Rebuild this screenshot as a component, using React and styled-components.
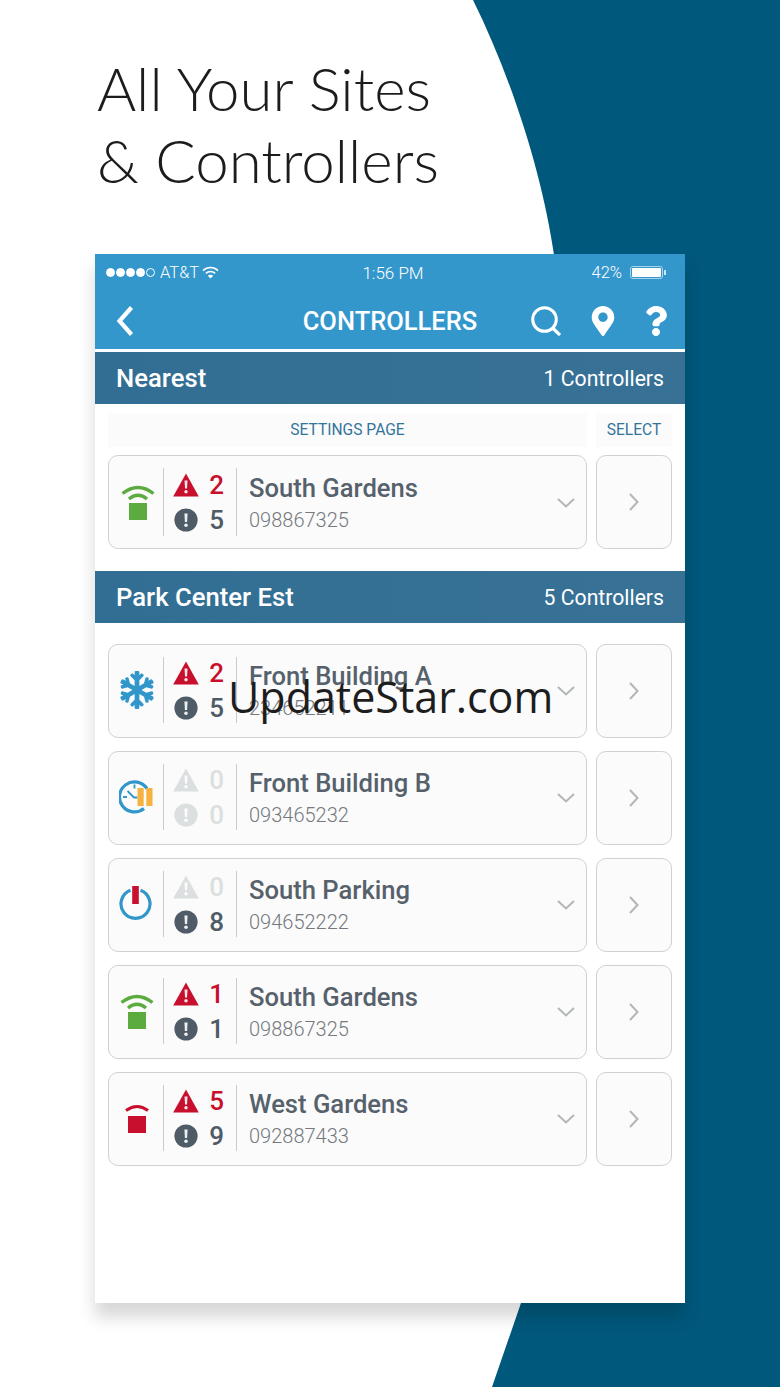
import React from 'react';
import styled, { createGlobalStyle } from 'styled-components';
import { FaSnowflake, FaMapMarkerAlt, FaQuestion } from 'react-icons/fa';

const GlobalStyle = createGlobalStyle`
  html, body {
    margin: 0;
    padding: 0;
    background: #fff;
  }
  * {
    box-sizing: border-box;
  }
`;

const controllers = [
  { name: 'Front Building A', serial: '234652211', status: 'snow', alerts: 2, warnings: 5 },
  { name: 'Front Building B', serial: '093465232', status: 'schedule', alerts: 0, warnings: 0 },
  { name: 'South Parking', serial: '094652222', status: 'power', alerts: 0, warnings: 8 },
  { name: 'South Gardens', serial: '098867325', status: 'online', alerts: 1, warnings: 1 },
  { name: 'West Gardens', serial: '092887433', status: 'offline', alerts: 5, warnings: 9 },
];

function OnlineIcon() {
  return (
    <svg width="36" height="36" viewBox="0 0 36 36" fill="none">
      <path d="M2.5 9.5Q18 -2.5 33.5 9.5" stroke="#5bab3f" strokeWidth="3.4" />
      <path d="M9 15Q18 7.5 27 15" stroke="#5bab3f" strokeWidth="3.4" />
      <rect x="9" y="19" width="18" height="17" fill="#5bab3f" />
    </svg>
  );
}

function OfflineIcon() {
  return (
    <svg width="36" height="36" viewBox="0 0 36 36" fill="none">
      <path d="M7 10.5Q18 2.5 29 10.5" stroke="#c8102e" strokeWidth="3" />
      <rect x="9" y="16" width="18" height="17" fill="#c8102e" />
    </svg>
  );
}

function ScheduleIcon() {
  return (
    <svg width="36" height="36" viewBox="0 0 36 36" fill="none">
      <path d="M25 29.5A15 15 0 1 1 28 9.7" stroke="#3197cb" strokeWidth="3.2" />
      <path d="M4 18H8M15.5 5.5V9.5M8.5 12L15 18.5H18.5" stroke="#3197cb" strokeWidth="1.8" />
      <rect x="18.5" y="9" width="6.2" height="18" fill="#f6b23f" />
      <rect x="27.3" y="9" width="6.2" height="18" fill="#f6b23f" />
    </svg>
  );
}

function PowerIcon() {
  return (
    <svg width="36" height="36" viewBox="0 0 36 36" fill="none">
      <path d="M11.5 4.2A14.5 14.5 0 1 0 21.5 4.2" stroke="#3197cb" strokeWidth="3.2" />
      <rect x="13.2" y="0" width="6.6" height="18" fill="#c8102e" />
    </svg>
  );
}

function StatusIcon({ status }) {
  if (status === 'snow') return <FaSnowflake size={38} color="#3197cb" />;
  if (status === 'schedule') return <ScheduleIcon />;
  if (status === 'power') return <PowerIcon />;
  if (status === 'offline') return <OfflineIcon />;
  return <OnlineIcon />;
}

function AlertTriangle({ color }) {
  return (
    <svg width="26" height="24" viewBox="0 0 26 24">
      <path d="M13 0.5L25.8 23.5H0.2Z" fill={color} />
      <path d="M11.5 7.5H14.5L14 15.5H12Z" fill="#fff" opacity="0.9" />
      <circle cx="13" cy="18.8" r="1.7" fill="#fff" opacity="0.9" />
    </svg>
  );
}

function AlertCircle({ color }) {
  return (
    <svg width="26" height="24" viewBox="0 0 26 24">
      <circle cx="13" cy="12" r="11.6" fill={color} />
      <path d="M11.4 5.5H14.6L14.1 14H11.9Z" fill="#fff" opacity="0.9" />
      <circle cx="13" cy="17.3" r="1.8" fill="#fff" opacity="0.9" />
    </svg>
  );
}

function ControllerRow({ item }) {
  const alertColor = item.alerts > 0 ? '#c8102e' : '#dcdfe0';
  const warnColor = item.warnings > 0 ? '#4f5b66' : '#dcdfe0';
  return (
    <RowGrid>
      <Card>
        <IconCell>
          <StatusIcon status={item.status} />
        </IconCell>
        <CountCell>
          <CountLine>
            <AlertTriangle color={alertColor} />
            <Count $color={alertColor}>{item.alerts}</Count>
          </CountLine>
          <CountLine>
            <AlertCircle color={warnColor} />
            <Count $color={warnColor}>{item.warnings}</Count>
          </CountLine>
        </CountCell>
        <Info>
          <Name>{item.name}</Name>
          <Serial>{item.serial}</Serial>
        </Info>
        <Chevron>
          <svg width="18" height="10" viewBox="0 0 18 10" fill="none">
            <path d="M1 1L9 8.5L17 1" stroke="#b3b6b8" strokeWidth="2" />
          </svg>
        </Chevron>
      </Card>
      <SelectButton>
        <svg width="10" height="18" viewBox="0 0 10 18" fill="none">
          <path d="M1 1L8.5 9L1 17" stroke="#b3b6b8" strokeWidth="2" />
        </svg>
      </SelectButton>
    </RowGrid>
  );
}

export default function App() {
  return (
    <Page>
      <GlobalStyle />
      <Wave viewBox="0 0 780 1387" preserveAspectRatio="none">
        <path
          d="M473 0C515 85 545 185 555 262C590 560 590 1000 521 1303L492 1387H780V0Z"
          fill="#00587c"
        />
      </Wave>

      <Heading>
        All Your Sites
        <br />
        &amp; Controllers
      </Heading>

      <Phone>
        <TopBlue>
          <StatusBar>
            <StatusLeft>
              <Dots>
                <Dot $on />
                <Dot $on />
                <Dot $on />
                <Dot $on />
                <Dot />
              </Dots>
              <span>AT&amp;T</span>
              <WifiIcon width="17" height="13" viewBox="0 0 17 13" fill="none">
                <path d="M1 4.6C5.3 0.5 11.7 0.5 16 4.6" stroke="#fff" strokeWidth="1.5" />
                <path d="M3.8 7.4C6.5 4.9 10.5 4.9 13.2 7.4" stroke="#fff" strokeWidth="1.5" />
                <path d="M5.8 9.7L8.5 12.6L11.2 9.7C9.6 8.4 7.4 8.4 5.8 9.7Z" fill="#fff" />
              </WifiIcon>
            </StatusLeft>
            <StatusTime>1:56 PM</StatusTime>
            <StatusRight>
              <span>42%</span>
              <Battery>
                <BatteryFill />
              </Battery>
            </StatusRight>
          </StatusBar>
          <NavBar>
            <BackIcon width="18" height="32" viewBox="0 0 18 32" fill="none">
              <path d="M15.5 2.5L3.5 16L15.5 29.5" stroke="#fff" strokeWidth="4.2" />
            </BackIcon>
            <NavTitle>CONTROLLERS</NavTitle>
            <NavIcons>
              <SearchIcon width="31" height="30" viewBox="0 0 31 30" fill="none">
                <circle cx="14.5" cy="13.5" r="11.8" stroke="#fff" strokeWidth="3" />
                <path d="M22.5 22L30 29" stroke="#fff" strokeWidth="3.2" />
              </SearchIcon>
              <FaMapMarkerAlt size={30} color="#fff" />
              <FaQuestion size={30} color="#fff" />
            </NavIcons>
          </NavBar>
        </TopBlue>

        <SectionHeader>
          <SectionTitle>Nearest</SectionTitle>
          <SectionCount>1 Controllers</SectionCount>
        </SectionHeader>
        <NearestBlock>
          <RowGrid>
            <ColumnLabel>SETTINGS PAGE</ColumnLabel>
            <ColumnLabel>SELECT</ColumnLabel>
          </RowGrid>
          <ControllerRow
            item={{ name: 'South Gardens', serial: '098867325', status: 'online', alerts: 2, warnings: 5 }}
          />
        </NearestBlock>

        <SectionHeader>
          <SectionTitle>Park Center Est</SectionTitle>
          <SectionCount>5 Controllers</SectionCount>
        </SectionHeader>
        <ListBlock>
          {controllers.map((item) => (
            <ControllerRow key={item.name} item={item} />
          ))}
        </ListBlock>
      </Phone>

      <Watermark>UpdateStar.com</Watermark>
    </Page>
  );
}

const Page = styled.div`
  position: relative;
  width: 780px;
  height: 1387px;
  overflow: hidden;
  background: #fff;
  padding: 52px 95px 0;
  font-family: Roboto, "Liberation Sans", sans-serif;
`;

const Wave = styled.svg`
  position: absolute;
  inset: 0;
  width: 780px;
  height: 1387px;
`;

const Heading = styled.h1`
  position: relative;
  margin: 0 0 58px 2px;
  height: 144px;
  font-family: Lato, "Open Sans", sans-serif;
  font-weight: 300;
  font-size: 60px;
  line-height: 72px;
  color: #1c1c1c;
`;

const Phone = styled.div`
  position: relative;
  width: 590px;
  height: 1049px;
  background: #fff;
  box-shadow: 0 14px 16px rgba(0, 0, 0, 0.16);
`;

const TopBlue = styled.div`
  background: #3497cc;
  border-bottom: 3px solid #fff;
`;

const StatusBar = styled.div`
  height: 36px;
  padding: 1px 22px 0 11px;
  display: grid;
  grid-template-columns: 1fr auto 1fr;
  align-items: center;
  color: #fff;
  font-size: 16.5px;
  font-weight: 300;
`;

const StatusLeft = styled.div`
  display: flex;
  align-items: center;
  gap: 5px;
`;

const WifiIcon = styled.svg`
  margin-left: -2px;
`;

const Dots = styled.div`
  display: flex;
  gap: 1px;
`;

const Dot = styled.i`
  width: 9px;
  height: 9px;
  border-radius: 50%;
  border: 1px solid #fff;
  background: ${(p) => (p.$on ? '#fff' : 'transparent')};
`;

const StatusTime = styled.div`
  padding-left: 17px;
  font-size: 17px;
`;

const StatusRight = styled.div`
  display: flex;
  justify-content: flex-end;
  align-items: center;
  gap: 8px;
`;

const Battery = styled.div`
  position: relative;
  width: 33px;
  height: 13px;
  border: 1px solid #a8d4ec;
  border-radius: 3px;
  padding: 1px;

  &::after {
    content: '';
    position: absolute;
    right: -4px;
    top: 3px;
    width: 2px;
    height: 5px;
    background: #cfe6f3;
  }
`;

const BatteryFill = styled.div`
  height: 100%;
  background: #fff;
  border-radius: 1px;
`;

const NavBar = styled.div`
  height: 59px;
  padding: 3px 14px 0 21px;
  display: grid;
  grid-template-columns: 1fr auto 1fr;
  align-items: center;
`;

const BackIcon = styled.svg`
  display: block;
`;

const NavTitle = styled.div`
  padding-right: 7px;
  color: #fff;
  font-size: 25.5px;
  font-weight: 500;
`;

const NavIcons = styled.div`
  display: flex;
  justify-content: flex-end;
  align-items: center;
  gap: 23px;
`;

const SearchIcon = styled.svg`
  margin-right: 4px;
`;

const SectionHeader = styled.div`
  height: 52px;
  padding: 0 21px;
  display: flex;
  align-items: center;
  justify-content: space-between;
  background: linear-gradient(90deg, #326e93, #387196);
  color: #fff;
`;

const SectionTitle = styled.div`
  font-size: 25.7px;
  font-weight: 500;
`;

const SectionCount = styled.div`
  font-size: 21.2px;
  font-weight: 400;
`;

const NearestBlock = styled.div`
  padding: 9px 13px 22px;
  display: flex;
  flex-direction: column;
  gap: 8px;
`;

const RowGrid = styled.div`
  display: grid;
  grid-template-columns: 479px 76px;
  column-gap: 9px;
`;

const ColumnLabel = styled.div`
  height: 34px;
  display: flex;
  align-items: center;
  justify-content: center;
  background: #fbfbfb;
  color: #33749b;
  font-size: 15.6px;
`;

const Card = styled.div`
  height: 94px;
  display: flex;
  align-items: stretch;
  padding: 12px 0;
  background: #fbfbfb;
  border: 1px solid #cfd1d2;
  border-radius: 10px;
`;

const IconCell = styled.div`
  width: 55px;
  padding-left: 3px;
  display: flex;
  align-items: center;
  justify-content: center;
  border-right: 1px solid #c9cbcc;
`;

const ListBlock = styled.div`
  padding: 21px 13px 0;
  display: flex;
  flex-direction: column;
  gap: 13px;

  ${Card} {
    padding-bottom: 14px;
  }

  ${IconCell} {
    padding-left: 1px;
  }
`;

const CountCell = styled.div`
  width: 73px;
  padding: 0 12px 0 9px;
  display: flex;
  flex-direction: column;
  justify-content: center;
  gap: 11px;
  border-right: 1px solid #c9cbcc;
`;

const CountLine = styled.div`
  display: flex;
  align-items: center;
  justify-content: space-between;
  height: 24px;
`;

const Count = styled.span`
  color: ${(p) => p.$color};
  font-size: 26px;
  font-weight: 500;
  line-height: 24px;
`;

const Info = styled.div`
  flex: 1;
  padding-left: 12px;
  display: flex;
  flex-direction: column;
  justify-content: center;
`;

const Name = styled.div`
  padding-bottom: 2px;
  color: #56616b;
  font-size: 25.6px;
  font-weight: 500;
  line-height: 34px;
`;

const Serial = styled.div`
  color: #75797d;
  font-size: 20px;
  font-weight: 300;
  line-height: 26px;
`;

const Chevron = styled.div`
  width: 29px;
  padding-top: 2px;
  display: flex;
  align-items: center;
`;

const SelectButton = styled.div`
  height: 94px;
  display: flex;
  align-items: center;
  justify-content: center;
  background: #fbfbfb;
  border: 1px solid #cfd1d2;
  border-radius: 10px;
`;

const Watermark = styled.div`
  position: absolute;
  left: 228px;
  top: 667px;
  font-family: "Open Sans", sans-serif;
  font-size: 43px;
  line-height: 60px;
  color: #1d1d1d;
`;
